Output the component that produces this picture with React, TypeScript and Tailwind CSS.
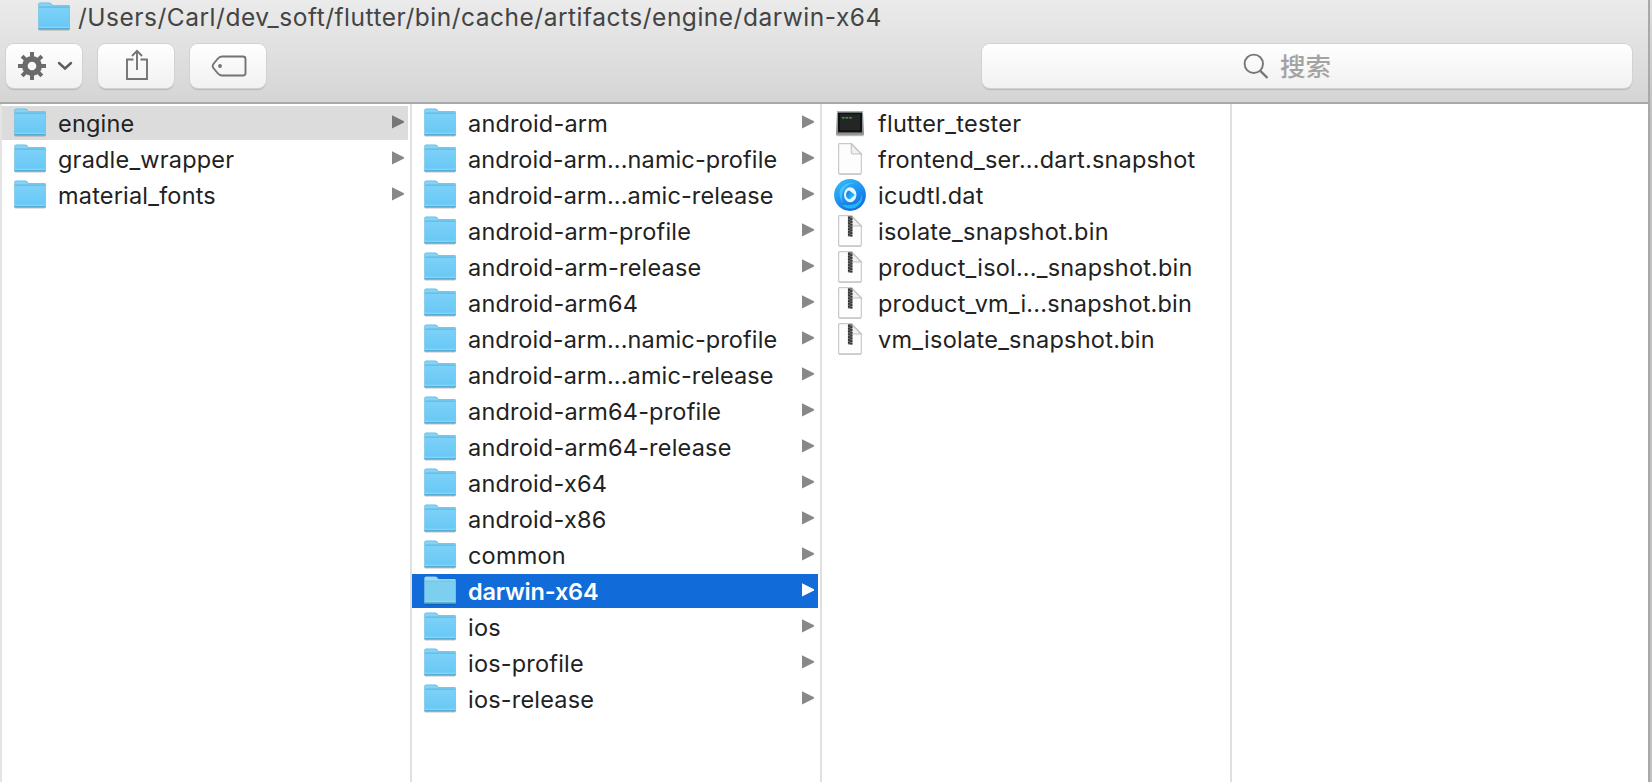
import React from "react";

type Kind = "folder" | "exec" | "doc" | "disc" | "zip";
type Item = { name: string; kind?: Kind; state?: "open" | "selected" };

const caches: Item[] = [
  { name: "engine", state: "open" },
  { name: "gradle_wrapper" },
  { name: "material_fonts" },
];

const engines: Item[] = [
  { name: "android-arm" },
  { name: "android-arm...namic-profile" },
  { name: "android-arm...amic-release" },
  { name: "android-arm-profile" },
  { name: "android-arm-release" },
  { name: "android-arm64" },
  { name: "android-arm...namic-profile" },
  { name: "android-arm...amic-release" },
  { name: "android-arm64-profile" },
  { name: "android-arm64-release" },
  { name: "android-x64" },
  { name: "android-x86" },
  { name: "common" },
  { name: "darwin-x64", state: "selected" },
  { name: "ios" },
  { name: "ios-profile" },
  { name: "ios-release" },
];

const files: Item[] = [
  { name: "flutter_tester", kind: "exec" },
  { name: "frontend_ser...dart.snapshot", kind: "doc" },
  { name: "icudtl.dat", kind: "disc" },
  { name: "isolate_snapshot.bin", kind: "zip" },
  { name: "product_isol..._snapshot.bin", kind: "zip" },
  { name: "product_vm_i...snapshot.bin", kind: "zip" },
  { name: "vm_isolate_snapshot.bin", kind: "zip" },
];

function Gradients() {
  return (
    <svg width="0" height="0" className="absolute">
      <defs>
        <linearGradient id="folderFront" x1="0" y1="0" x2="0" y2="1">
          <stop offset="0" stopColor="#7dd1f8" />
          <stop offset="1" stopColor="#68c8f6" />
        </linearGradient>
        <linearGradient id="discBlue" x1="0.1" y1="0" x2="0.7" y2="1">
          <stop offset="0" stopColor="#35bdf8" />
          <stop offset="0.5" stopColor="#1e96f2" />
          <stop offset="1" stopColor="#1668dd" />
        </linearGradient>
        <linearGradient id="discInner" x1="0" y1="0" x2="1" y2="0.6">
          <stop offset="0" stopColor="#1670ea" />
          <stop offset="1" stopColor="#27c8fb" />
        </linearGradient>
      </defs>
    </svg>
  );
}

function Folder({ muted = false }: { muted?: boolean }) {
  return (
    <svg viewBox="0 0 32 30" className="h-[30px] w-8 shrink-0">
      <path d="M0.3 27V2Q0.3 0.5 2 0.5H11Q12.5 0.5 13.3 1.6L14.5 3H30.5Q31.8 3 31.8 4.2V27Z" fill={muted ? "#8ccfeb" : "#62bce4"} />
      <path d="M1 5V2.2Q1 1.2 2 1.2H11Q12 1.2 12.7 2.1L14 3.6H31V5Z" fill={muted ? "#a1dbf2" : "#85d3f5"} />
      <rect x="1" y="5.3" width="30.2" height="20.7" fill={muted ? "#7dcff0" : "url(#folderFront)"} />
      <path d="M1 5H31.2" stroke={muted ? "#6ebde0" : "#58b3dc"} strokeWidth="0.9" />
      <path d="M1 25.3H31.2" stroke="#93dafa" strokeWidth="0.9" />
      <path d="M0.4 27H31.7" stroke="#55a8cf" strokeWidth="1.6" />
      <path d="M1 28.5H31" stroke="#000" strokeOpacity="0.12" />
    </svg>
  );
}

function Page({ children }: { children?: React.ReactNode }) {
  return (
    <svg viewBox="0 0 32 32" className="h-8 w-8 shrink-0">
      <path d="M5.5 0.7H17.5L27.3 11V30Q27.3 31 26.3 31H5.5Q4.6 31 4.6 30V1.7Q4.6 0.7 5.5 0.7Z" fill="#fdfdfd" stroke="#c9c9c9" strokeWidth="1.2" />
      <path d="M17.3 0.8V9.5Q17.3 11 18.8 11H27.2Z" fill="#f1f1f1" stroke="#c2c2c2" strokeWidth="1.1" />
      <path d="M5 31.1H27" stroke="#bababa" strokeWidth="1" />
      {children}
    </svg>
  );
}

function FileIcon({ kind, muted }: { kind: Kind; muted: boolean }) {
  switch (kind) {
    case "exec":
      return (
        <svg viewBox="0 0 32 32" className="h-8 w-8 shrink-0">
          <path d="M3 4H29L30 26.5Q30 28.5 28.5 28.5H3.5Q2 28.5 2 26.5Z" fill="#8f9294" />
          <path d="M3 4H29V6H3Z" fill="#a9b3b5" />
          <rect x="4" y="5.6" width="24" height="19.8" fill="#111312" />
          <rect x="6" y="7.2" width="20" height="16" fill="#242625" />
          <path d="M8 10.8H18.5" stroke="#3fa24d" strokeWidth="1.6" strokeDasharray="2.6 1" />
          <path d="M2.5 28.5H29.5" stroke="#b8b8b8" strokeWidth="1.4" />
        </svg>
      );
    case "doc":
      return <Page />;
    case "zip":
      return (
        <Page>
          <rect x="14" y="1" width="4.4" height="20.5" fill="#777" />
          <path d="M15 2V21.5" stroke="#333" strokeWidth="2.2" strokeDasharray="1.7 1.1" />
          <path d="M17.3 3.3V21.5" stroke="#333" strokeWidth="2.2" strokeDasharray="1.7 1.1" />
        </Page>
      );
    case "disc":
      return (
        <svg viewBox="0 0 32 32" className="h-8 w-8 shrink-0">
          <circle cx="16" cy="16" r="15.9" fill="url(#discBlue)" />
          <path d="M6 11Q11 2 22 4Q14 4 10 10Q6 17 9 24Q4 18 6 11Z" fill="#5ed0fb" opacity="0.65" />
          <path d="M16 26Q26 26 28 15Q30 24 21 29Q13 31 8 26Z" fill="#24c3fa" opacity="0.8" />
          <ellipse cx="16.2" cy="15.8" rx="6.2" ry="7.5" fill="#e6f6ff" />
          <path d="M15.2 11.4L20.4 15.2V16.6L15.6 20.4Q12.2 19.6 12 16Q12.2 12.2 15.2 11.4Z" fill="url(#discInner)" />
        </svg>
      );
    default:
      return <Folder muted={muted} />;
  }
}

function tracking(item: Item) {
  if (item.state === "selected") return "tracking-[-0.2px]";
  const shortened = item.name.includes("...");
  if (item.kind) return shortened ? "tracking-[0.18px]" : "tracking-[0.26px]";
  return shortened ? "tracking-[0.1px]" : "tracking-[0.19px]";
}

function Row({ item }: { item: Item }) {
  const kind = item.kind ?? "folder";
  const selected = item.state === "selected";
  const tone = selected
    ? "bg-[#116bd8] text-white font-semibold"
    : item.state === "open"
      ? "bg-[#dcdcdc] text-[#222]"
      : "text-[#222]";
  return (
    <li className={`flex h-[34px] items-center pl-3 pr-1 ${tone}`}>
      <FileIcon kind={kind} muted={selected} />
      <span className={`ml-3 grow whitespace-nowrap pt-[2px] text-[23.5px] leading-[34px] ${tracking(item)}`}>
        {item.name}
      </span>
      {kind === "folder" && (
        <svg viewBox="0 0 12 14" className="mb-[2px] h-[14px] w-3 shrink-0">
          <path d="M0 0.2L12 6.3V7.5L0 13.6Z" fill={selected ? "#fff" : item.state ? "#777" : "#888"} />
        </svg>
      )}
    </li>
  );
}

function Column({ items }: { items: Item[] }) {
  return (
    <ul className="flex w-[410px] shrink-0 flex-col gap-[2px] border-r-2 border-[#e0e0e0] pr-[2px] pt-[2px]">
      {items.map((item, i) => (
        <Row key={i} item={item} />
      ))}
    </ul>
  );
}

function ToolButton({ children }: { children: React.ReactNode }) {
  return (
    <button className="flex h-11 w-[76px] items-center justify-center rounded-[8px] bg-linear-to-b from-white to-[#f1f1f1] pl-[2px] shadow-[0_0_0_1px_#d2d2d2,0_2px_1px_#b9b9b9]">
      {children}
    </button>
  );
}

export default function App() {
  return (
    <div className="flex h-[782px] w-[1652px] overflow-hidden bg-white font-['Inter','Noto_Sans_CJK_SC',sans-serif]">
      <Gradients />
      <div className="flex min-w-0 grow flex-col">
        <header className="flex h-[104px] shrink-0 flex-col border-b-2 border-[#a9a9a9] bg-linear-to-b from-[#ebebeb] to-[#d5d5d5]">
          <div className="flex h-11 items-start pl-[38px] pt-[2px]">
            <Folder />
            <h1 className="ml-[8px] whitespace-nowrap text-[24.5px] leading-[30px] tracking-[0.51px] text-[#444]">
              /Users/Carl/dev_soft/flutter/bin/cache/artifacts/engine/darwin-x64
            </h1>
          </div>
          <div className="flex pl-[6px] pr-4">
            <div className="flex gap-4">
              <ToolButton>
                <svg viewBox="0 0 28 28" className="h-7 w-7">
                  <g stroke="#6b6b6b" strokeWidth="4">
                    <path d="M14 0V28M0 14H28M4.1 4.1L23.9 23.9M4.1 23.9L23.9 4.1" />
                  </g>
                  <circle cx="14" cy="14" r="10" fill="#6b6b6b" />
                  <circle cx="14" cy="14" r="4.3" fill="#fafafa" />
                </svg>
                <svg viewBox="0 0 14 8" className="ml-3 h-2 w-[14px] overflow-visible">
                  <path d="M1 1L7 6.5L13 1" fill="none" stroke="#5d5d5d" strokeWidth="2.4" strokeLinecap="round" />
                </svg>
              </ToolButton>
              <ToolButton>
                <svg viewBox="0 0 24 32" className="mb-[2px] h-8 w-6" fill="none" stroke="#737373" strokeWidth="1.9">
                  <path d="M8.5 10.5H2V30H22V10.5H15.5M12 21V2M7 7L12 1.8L17 7" />
                </svg>
              </ToolButton>
              <ToolButton>
                <svg viewBox="0 0 36 22" className="h-[22px] w-9" fill="none" stroke="#737373" strokeWidth="1.9">
                  <path d="M11 1.5H32Q34.5 1.5 34.5 4V18Q34.5 20.5 32 20.5H11Q8.5 20.5 6.5 18L2.4 13Q1 11 2.4 9L6.5 4Q8.5 1.5 11 1.5Z" />
                  <circle cx="9" cy="11" r="1.9" fill="#737373" stroke="none" />
                </svg>
              </ToolButton>
            </div>
            <div className="ml-auto flex h-11 w-[650px] items-center rounded-[8px] bg-linear-to-b from-white to-[#f1f1f1] pl-[261px] shadow-[0_0_0_1px_#d2d2d2,0_2px_1px_#b9b9b9]">
              <svg viewBox="0 0 26 26" className="h-[26px] w-[26px]" fill="none" stroke="#777" strokeWidth="1.9">
                <circle cx="10.8" cy="10.8" r="9.2" />
                <path d="M17.3 17.8L24.5 25" strokeWidth="2.4" />
              </svg>
              <span className="ml-[11px] pt-px text-[25.5px] font-medium leading-[43px] text-[#a3a3a3]">搜索</span>
            </div>
          </div>
        </header>
        <main className="flex min-h-0 grow border-l-2 border-[#e4e4e4]">
          <Column items={caches} />
          <Column items={engines} />
          <Column items={files} />
        </main>
      </div>
      <div className="w-1 shrink-0 border-l-2 border-[#a9a9a9] bg-linear-to-b from-[#dedede] via-[#c0c0c0] via-15% to-[#c0c0c0]" />
    </div>
  );
}
